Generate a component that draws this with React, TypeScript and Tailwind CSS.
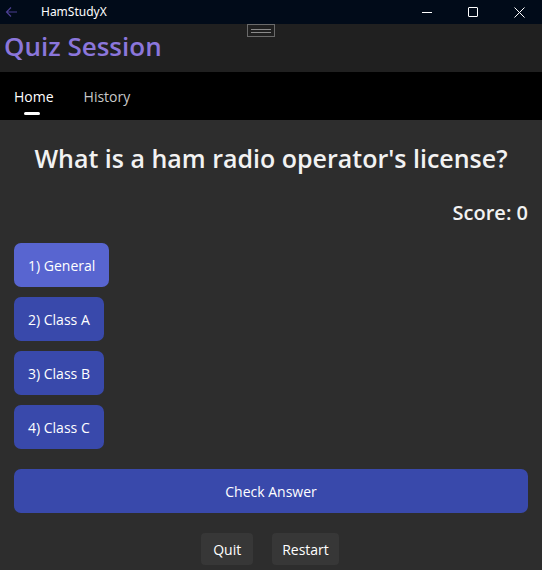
import React from "react";

export default function App() {
  const options = ["1) General", "2) Class A", "3) Class B", "4) Class C"];
  return (
    <div className="w-[542px] h-[570px] overflow-hidden bg-[#2d2d2d] flex flex-col" style={{ fontFamily: '"Open Sans", "Noto Sans", sans-serif' }}>
      {/* Title bar */}
      <div className="h-[24px] bg-[#010b19] flex items-center relative shrink-0">
        <svg className="ml-[5px]" width="13" height="12" viewBox="0 0 13 12" fill="none" stroke="#4b3f92" strokeWidth="1.2">
          <path d="M12 6H1.5M6 1.5L1.5 6L6 10.5" />
        </svg>
        <span className="ml-[23px] text-[12px] text-white" style={{ fontFamily: '"Noto Sans", sans-serif' }}>HamStudyX</span>
        <div className="ml-auto flex items-center h-full">
          <div className="w-[46px] h-full flex items-center justify-center">
            <div className="w-[10px] h-px bg-white" />
          </div>
          <div className="w-[46px] h-full flex items-center justify-center">
            <div className="w-[10px] h-[10px] border border-white rounded-[1px]" />
          </div>
          <div className="w-[46px] h-full flex items-center justify-center">
            <svg width="11" height="11" viewBox="0 0 11 11" stroke="white" strokeWidth="1">
              <path d="M0.5 0.5L10.5 10.5M10.5 0.5L0.5 10.5" />
            </svg>
          </div>
        </div>
      </div>
      {/* Header */}
      <div className="h-[48px] bg-[#202020] relative shrink-0 flex items-center">
        <div className="absolute left-[247px] top-0 w-[28px] h-[13px] border border-[#6a6a6a] flex flex-col items-center justify-center gap-[2px]">
          <div className="w-[20px] h-px bg-[#8a8a8a]" />
          <div className="w-[20px] h-px bg-[#8a8a8a]" />
        </div>
        <h1 className="ml-[4px] text-[26px] font-semibold text-[#8b76db] leading-none -mt-[5px]">Quiz Session</h1>
      </div>
      {/* Nav */}
      <div className="h-[48px] bg-black flex items-center shrink-0 text-[14px]">
        <div className="ml-[14px] relative text-white">
          Home
          <div className="absolute left-[10px] top-[26px] w-[16px] h-[3px] rounded-full bg-white" />
        </div>
        <div className="ml-[30px] text-[#c8c8c8]">History</div>
      </div>
      {/* Content */}
      <div className="flex-1 px-[14px] flex flex-col">
        <h2 className="text-center text-[25px] font-semibold text-[#f2f2f2] mt-[22px] leading-[32px] whitespace-nowrap">What is a ham radio operator's license?</h2>
        <div className="text-right text-[20px] font-semibold text-[#f2f2f2] mt-[26px] leading-[26px]">Score: 0</div>
        <div className="flex flex-col gap-[10px] mt-[17px] items-start">
          {options.map((o, i) => (
            <button key={o} className={`h-[44px] px-[14px] rounded-[7px] text-[14px] text-white ${i === 0 ? "bg-[#5865d0]" : "bg-[#3949ab]"}`}>
              {o}
            </button>
          ))}
        </div>
        <button className="mt-[20px] h-[44px] w-full rounded-[7px] bg-[#3949ab] text-[14px] text-white">Check Answer</button>
        <div className="flex justify-center gap-[19px] mt-[20px] pr-[2px]">
          <button className="h-[32px] px-[12px] rounded-[4px] bg-[#373737] text-[14px] text-white">Quit</button>
          <button className="h-[32px] px-[10px] rounded-[4px] bg-[#373737] text-[14px] text-white">Restart</button>
        </div>
      </div>
    </div>
  );
}
